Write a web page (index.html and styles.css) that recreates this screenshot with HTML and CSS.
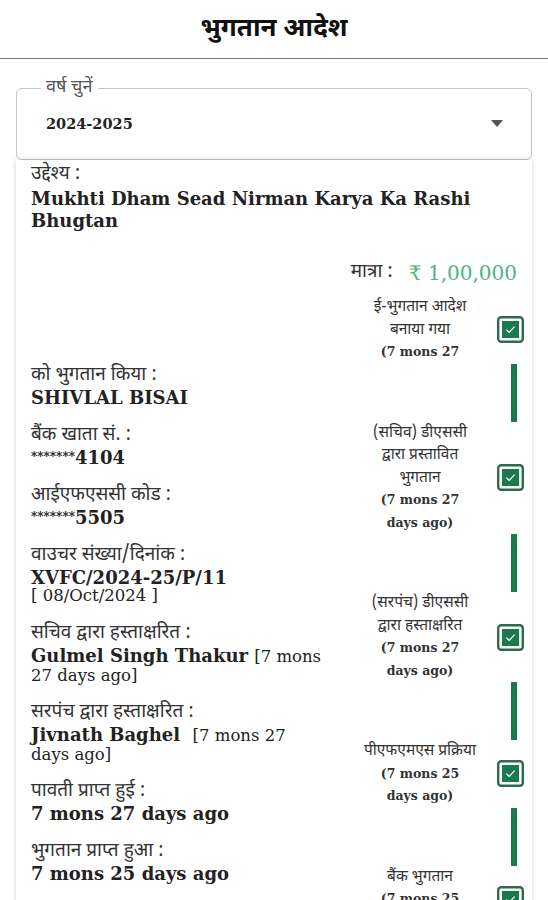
FILE: index.html
```html
<!DOCTYPE html>
<html lang="hi">
    <head>
        <meta charset="UTF-8">
        <meta name="viewport" content="width=device-width, initial-scale=1.0">
        <title>भुगतान आदेश</title>
        <link rel="stylesheet" href="styles.css">
    </head>
    <body>
        <header class="topbar">
            <h1>भुगतान आदेश</h1>
        </header>

        <fieldset class="year-select">
            <legend>वर्ष चुनें</legend>
            <div class="year-value">
                <span>2024-2025</span>
                <span class="caret"></span>
            </div>
        </fieldset>

        <div class="order-card">
            <div class="purpose">
                <div class="label">उद्देश्य :</div>
                <div class="purpose-text">Mukhti Dham Sead Nirman Karya Ka Rashi Bhugtan</div>
            </div>

            <div class="amount-row">
                <span class="label">मात्रा :</span>
                <span class="amount">₹ 1,00,000</span>
            </div>

            <div class="details">
                <div class="info-col">
                    <div class="field">
                        <div class="label">को भुगतान किया :</div>
                        <div class="value">SHIVLAL BISAI</div>
                    </div>
                    <div class="field">
                        <div class="label">बैंक खाता सं. :</div>
                        <div class="value"><span class="stars">*******</span>4104</div>
                    </div>
                    <div class="field">
                        <div class="label">आईएफएससी कोड :</div>
                        <div class="value"><span class="stars">*******</span>5505</div>
                    </div>
                    <div class="field">
                        <div class="label">वाउचर संख्या/दिनांक :</div>
                        <div class="value">XVFC/2024-25/P/11</div>
                        <div class="sub-value">[ 08/Oct/2024 ]</div>
                    </div>
                    <div class="field">
                        <div class="label">सचिव द्वारा हस्ताक्षरित :</div>
                        <div class="value">Gulmel Singh Thakur <span class="when">[7 mons 27 days ago]</span></div>
                    </div>
                    <div class="field">
                        <div class="label">सरपंच द्वारा हस्ताक्षरित :</div>
                        <div class="value">Jivnath Baghel &nbsp;<span class="when">[7 mons 27 days ago]</span></div>
                    </div>
                    <div class="field">
                        <div class="label">पावती प्राप्त हुई :</div>
                        <div class="value">7 mons 27 days ago</div>
                    </div>
                    <div class="field">
                        <div class="label">भुगतान प्राप्त हुआ :</div>
                        <div class="value">7 mons 25 days ago</div>
                    </div>
                </div>

                <div class="status-col">
                    <div class="step">
                        <div class="step-text">ई-भुगतान आदेश<br>बनाया गया<br><b>(7 mons 27</b></div>
                        <svg class="tick" viewBox="0 0 27 27"><rect x="1.2" y="1.2" width="24.6" height="24.6" rx="3" fill="none" stroke="#2e6b4b" stroke-width="2.4"/><rect x="5" y="5" width="17" height="17" fill="#1b7a4d"/><path d="M9.3 13.6l2.9 2.9 5.4-5.8" fill="none" stroke="#fff" stroke-width="1.2"/></svg>
                    </div>
                    <div class="bar"></div>
                    <div class="step">
                        <div class="step-text">(सचिव) डीएससी<br>द्वारा प्रस्तावित<br>भुगतान<br><b>(7 mons 27<br>days ago)</b></div>
                        <svg class="tick" viewBox="0 0 27 27"><rect x="1.2" y="1.2" width="24.6" height="24.6" rx="3" fill="none" stroke="#2e6b4b" stroke-width="2.4"/><rect x="5" y="5" width="17" height="17" fill="#1b7a4d"/><path d="M9.3 13.6l2.9 2.9 5.4-5.8" fill="none" stroke="#fff" stroke-width="1.2"/></svg>
                    </div>
                    <div class="bar"></div>
                    <div class="step">
                        <div class="step-text">(सरपंच) डीएससी<br>द्वारा हस्ताक्षरित<br><b>(7 mons 27<br>days ago)</b></div>
                        <svg class="tick" viewBox="0 0 27 27"><rect x="1.2" y="1.2" width="24.6" height="24.6" rx="3" fill="none" stroke="#2e6b4b" stroke-width="2.4"/><rect x="5" y="5" width="17" height="17" fill="#1b7a4d"/><path d="M9.3 13.6l2.9 2.9 5.4-5.8" fill="none" stroke="#fff" stroke-width="1.2"/></svg>
                    </div>
                    <div class="bar"></div>
                    <div class="step">
                        <div class="step-text">पीएफएमएस प्रक्रिया<br><b>(7 mons 25<br>days ago)</b></div>
                        <svg class="tick" viewBox="0 0 27 27"><rect x="1.2" y="1.2" width="24.6" height="24.6" rx="3" fill="none" stroke="#2e6b4b" stroke-width="2.4"/><rect x="5" y="5" width="17" height="17" fill="#1b7a4d"/><path d="M9.3 13.6l2.9 2.9 5.4-5.8" fill="none" stroke="#fff" stroke-width="1.2"/></svg>
                    </div>
                    <div class="bar"></div>
                    <div class="step">
                        <div class="step-text">बैंक भुगतान<br><b>(7 mons 25<br>days ago)</b></div>
                        <svg class="tick" viewBox="0 0 27 27"><rect x="1.2" y="1.2" width="24.6" height="24.6" rx="3" fill="none" stroke="#2e6b4b" stroke-width="2.4"/><rect x="5" y="5" width="17" height="17" fill="#1b7a4d"/><path d="M9.3 13.6l2.9 2.9 5.4-5.8" fill="none" stroke="#fff" stroke-width="1.2"/></svg>
                    </div>
                </div>
            </div>
        </div>
    </body>
</html>
```

FILE: styles.css
```css
body {
    margin: 0;
    background: #fff;
    color: #222;
    font-family: "Noto Sans Devanagari", "Noto Serif Devanagari", "Lohit Devanagari", "DejaVu Sans", sans-serif;
    overflow: hidden;
}
.topbar {
    height: 58px;
    border-bottom: 1px solid #7a7a7a;
    text-align: center;
}
.topbar h1 {
    margin: 0;
    padding-top: 3px;
    font-size: 26px;
    font-weight: bold;
    line-height: 55px;
    color: #111;
}
.year-select {
    margin: 19px 16px 0;
    padding: 0 28px 11px 24px;
    border: 1px solid #c4c4c4;
    border-radius: 6px;
}
.year-select legend {
    padding: 0 5px;
    font-size: 18px;
    line-height: 20px;
    color: #555;
}
.year-value {
    display: flex;
    align-items: center;
    justify-content: space-between;
    height: 50px;
    padding-left: 5px;
    font-family: "DejaVu Serif", serif;
    font-weight: bold;
    font-size: 14.5px;
    color: #222;
}
.caret {
    width: 0;
    height: 0;
    border-left: 6px solid transparent;
    border-right: 6px solid transparent;
    border-top: 7px solid #555;
}
.order-card {
    margin: 0 16px;
    padding: 4px 8px 0 15px;
    background: #fff;
    box-shadow: 0 0 5px rgba(0, 0, 0, 0.18);
    height: 900px;
}
.label {
    font-size: 19px;
    line-height: 24px;
    color: #333;
}
.purpose .label {
    line-height: 22px;
}
.purpose-text {
    margin-top: 2px;
    font-family: "DejaVu Serif", serif;
    font-weight: bold;
    font-size: 18px;
    line-height: 22px;
    color: #222;
}
.amount-row {
    margin-top: 26px;
    display: flex;
    justify-content: flex-end;
    align-items: center;
    gap: 16px;
    padding-right: 7px;
    height: 30px;
}
.amount {
    font-family: "DejaVu Serif", serif;
    font-size: 20px;
    color: #4db384;
}
.details {
    margin-top: 8px;
    display: grid;
    grid-template-columns: 1fr auto;
}
.info-col {
    padding-top: 68px;
    padding-right: 28px;
}
.field {
    margin-bottom: 17px;
}
.value {
    margin-top: 1px;
    font-family: "DejaVu Serif", serif;
    font-weight: bold;
    font-size: 18px;
    line-height: 18px;
    color: #222;
}
.stars {
    font-size: 12px;
    line-height: 1;
    vertical-align: 3px;
}
.when {
    font-weight: normal;
    font-size: 16.5px;
    line-height: 1;
}
.sub-value {
    font-family: "DejaVu Serif", serif;
    font-size: 16.5px;
    line-height: 18px;
}
.status-col {
    width: 169px;
}
.step {
    display: flex;
    align-items: center;
    gap: 12px;
}
.step-text {
    width: 130px;
    text-align: center;
    font-size: 15.5px;
    line-height: 22.5px;
    color: #333;
}
.step-text b {
    font-family: "DejaVu Serif", serif;
    font-size: 12.5px;
}
.tick {
    width: 27px;
    height: 27px;
    flex: none;
}
.bar {
    width: 6px;
    height: 58px;
    margin-left: 156px;
    background: #1b7a4d;
}
```
